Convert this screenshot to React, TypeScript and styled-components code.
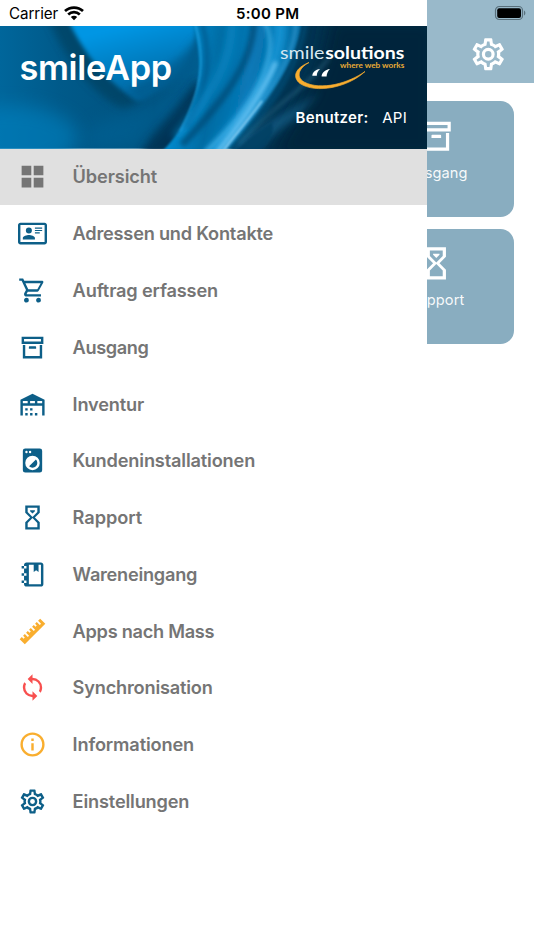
import React from 'react';
import styled, { createGlobalStyle } from 'styled-components';

const GlobalStyle = createGlobalStyle`
  *, *::before, *::after { box-sizing: border-box; }
  body { margin: 0; background: #fff; font-family: Inter, Roboto, sans-serif; }
`;

const BLUE = '#0d5f88';
const GREY = '#757575';
const AMBER = '#f9ae2f';
const RED = '#f8504f';

const icons = {
  grid: 'M3,11H11V3H3M3,21H11V13H3M13,21H21V13H13M13,3V11H21V3',
  card: 'M22,3H2C0.91,3.04 0.04,3.91 0,5V19C0.04,20.09 0.91,20.96 2,21H22C23.09,20.96 23.96,20.09 24,19V5C23.96,3.91 23.09,3.04 22,3M22,19H2V5H22V19M14,17V15.75C14,14.09 10.66,13.25 9,13.25C7.34,13.25 4,14.09 4,15.75V17H14M9,7A2.5,2.5 0 0,0 6.5,9.5A2.5,2.5 0 0,0 9,12A2.5,2.5 0 0,0 11.5,9.5A2.5,2.5 0 0,0 9,7M14,7V8H20V7H14M14,9V10H20V9H14M14,11V12H18V11H14',
  cart: 'M17,18A2,2 0 0,1 19,20A2,2 0 0,1 17,22C15.89,22 15,21.1 15,20C15,18.89 15.89,18 17,18M1,2H4.27L5.21,4H20A1,1 0 0,1 21,5C21,5.17 20.95,5.34 20.88,5.5L17.3,11.97C16.96,12.58 16.3,13 15.55,13H8.1L7.2,14.63L7.17,14.75A0.25,0.25 0 0,0 7.42,15H19V17H7C5.89,17 5,16.1 5,15C5,14.65 5.09,14.32 5.24,14.04L6.6,11.59L3,4H1V2M7,18A2,2 0 0,1 9,20A2,2 0 0,1 7,22C5.89,22 5,21.1 5,20C5,18.89 5.89,18 7,18M16,11L18.78,6H6.14L8.5,11H16Z',
  archive: 'M20 21H4V10H6V19H18V10H20V21M3 3H21V9H3V3M9.5 11H14.5C14.78 11 15 11.22 15 11.5V13H9V11.5C9 11.22 9.22 11 9.5 11M5 5V7H19V5H5Z',
  warehouse: 'M6 19H8V21H6V19M12 3L2 8V21H4V13H20V21H22V8L12 3M8 11H4V9H8V11M14 11H10V9H14V11M20 11H16V9H20V11M6 15H8V17H6V15M10 15H12V17H10V15M10 19H12V21H10V19M14 19H16V21H14V19Z',
  washer: 'M14.83,11.17C16.39,12.73 16.39,15.27 14.83,16.83C13.27,18.39 10.73,18.39 9.17,16.83L14.83,11.17M6,2H18A2,2 0 0,1 20,4V20A2,2 0 0,1 18,22H6A2,2 0 0,1 4,20V4A2,2 0 0,1 6,2M7,4A1,1 0 0,0 6,5A1,1 0 0,0 7,6A1,1 0 0,0 8,5A1,1 0 0,0 7,4M10,4A1,1 0 0,0 9,5A1,1 0 0,0 10,6A1,1 0 0,0 11,5A1,1 0 0,0 10,4M12,8A6,6 0 0,0 6,14A6,6 0 0,0 12,20A6,6 0 0,0 18,14A6,6 0 0,0 12,8Z',
  sand: 'M6,2V8L10,12L6,16V22H18V16L14,12L18,8V2H6M16,16.5V20H8V16.5L12,12.5L16,16.5M12,11.5L8,7.5V4H16V7.5L12,11.5M10,6V6.75L12,8.75L14,6.75V6H10Z',
  notebook: 'M3 7V5H5V4C5 2.9 5.9 2 7 2H19C20.1 2 21 2.9 21 4V20C21 21.1 20.1 22 19 22H7C5.9 22 5 21.1 5 20V19H3V17H5V13H3V11H5V7H3M9 4V20H19V4H17V10L15 8.5L13 10V4H9M5 5V7H7V5H5M5 11V13H7V11H5M5 17V19H7V17H5Z',
  ruler: 'M1.39,18.36L3.16,16.6L4.58,18L5.64,16.95L4.22,15.54L5.64,14.12L8.11,16.6L9.17,15.54L6.7,13.06L8.11,11.65L9.53,13.06L10.59,12L9.17,10.59L10.59,9.17L13.06,11.65L14.12,10.59L11.65,8.11L13.06,6.7L14.47,8.11L15.54,7.05L14.12,5.64L15.54,4.22L18,6.7L19.07,5.64L16.6,3.16L18.36,1.39L22.61,5.64L5.64,22.61L1.39,18.36Z',
  sync: 'M12,18A6,6 0 0,1 6,12C6,11 6.25,10.03 6.7,9.2L5.24,7.74C4.46,8.97 4,10.43 4,12A8,8 0 0,0 12,20V23L16,19L12,15M12,4V1L8,5L12,9V6A6,6 0 0,1 18,12C18,13 17.75,13.97 17.3,14.8L18.76,16.26C19.54,15.03 20,13.57 20,12A8,8 0 0,0 12,4Z',
  info: 'M11,9H13V7H11M12,20C7.59,20 4,16.41 4,12C4,7.59 7.59,4 12,4C16.41,4 20,7.59 20,12C20,16.41 16.41,20 12,20M12,2A10,10 0 0,0 2,12A10,10 0 0,0 12,22A10,10 0 0,0 22,12A10,10 0 0,0 12,2M11,17H13V11H11V17Z',
  cog: 'M12,8A4,4 0 0,1 16,12A4,4 0 0,1 12,16A4,4 0 0,1 8,12A4,4 0 0,1 12,8M12,10A2,2 0 0,0 10,12A2,2 0 0,0 12,14A2,2 0 0,0 14,12A2,2 0 0,0 12,10M10,22C9.75,22 9.54,21.82 9.5,21.58L9.13,18.93C8.5,18.68 7.96,18.34 7.44,17.94L4.95,18.95C4.73,19.03 4.46,18.95 4.34,18.73L2.34,15.27C2.21,15.05 2.27,14.78 2.46,14.63L4.57,12.97L4.5,12L4.57,11L2.46,9.37C2.27,9.22 2.21,8.95 2.34,8.73L4.34,5.27C4.46,5.05 4.73,4.96 4.95,5.05L7.44,6.05C7.96,5.66 8.5,5.32 9.13,5.07L9.5,2.42C9.54,2.18 9.75,2 10,2H14C14.25,2 14.46,2.18 14.5,2.42L14.87,5.07C15.5,5.32 16.04,5.66 16.56,6.05L19.05,5.05C19.27,4.96 19.54,5.05 19.66,5.27L21.66,8.73C21.79,8.95 21.73,9.22 21.54,9.37L19.43,11L19.5,12L19.43,13L21.54,14.63C21.73,14.78 21.79,15.05 21.66,15.27L19.66,18.73C19.54,18.95 19.27,19.04 19.05,18.95L16.56,17.95C16.04,18.34 15.5,18.68 14.87,18.93L14.5,21.58C14.46,21.82 14.25,22 14,22H10M11.25,4L10.88,6.61C9.68,6.86 8.62,7.5 7.85,8.39L5.44,7.35L4.69,8.65L6.8,10.2C6.4,11.37 6.4,12.64 6.8,13.8L4.68,15.36L5.43,16.66L7.86,15.62C8.63,16.5 9.68,17.14 10.87,17.38L11.24,20H12.76L13.13,17.39C14.32,17.14 15.37,16.5 16.14,15.62L18.57,16.66L19.32,15.36L17.2,13.81C17.6,12.64 17.6,11.37 17.2,10.2L19.31,8.65L18.56,7.35L16.15,8.39C15.38,7.5 14.32,6.86 13.12,6.62L12.75,4H11.25Z',
};

type IconName = keyof typeof icons;

const IconSvg = styled.svg<{ $size: number; $color: string }>`
  display: block;
  flex: none;
  width: ${(p) => p.$size}px;
  height: ${(p) => p.$size}px;
  fill: ${(p) => p.$color};
  fill-rule: evenodd;
`;

function Icon({ name, size, color }: { name: IconName; size: number; color: string }) {
  return (
    <IconSvg viewBox="0 0 24 24" $size={size} $color={color} aria-hidden="true">
      <path d={icons[name]} />
    </IconSvg>
  );
}

const Screen = styled.div`
  position: relative;
  width: 534px;
  height: 950px;
  overflow: hidden;
  background: #fff;
`;

const AppBar = styled.header`
  display: flex;
  justify-content: flex-end;
  align-items: flex-end;
  height: 82.6px;
  padding: 0 26.3px 9.3px 0;
  background: #99b9ca;
`;

const Tiles = styled.main`
  display: flex;
  flex-direction: column;
  align-items: flex-end;
  gap: 11.8px;
  padding: 18.8px 19.6px 0 0;
`;

const Tile = styled.section`
  display: flex;
  flex-direction: column;
  align-items: center;
  width: 155.4px;
  height: 115.6px;
  padding-top: 15.4px;
  border-radius: 13.5px;
  background: #89adc0;
`;

const TileLabel = styled.span`
  margin-top: 7.2px;
  font-size: 14.6px;
  line-height: 20px;
  letter-spacing: 0.12px;
  color: rgba(255, 255, 255, 0.94);
`;

const Drawer = styled.aside`
  position: absolute;
  inset: 0 auto 0 0;
  display: flex;
  flex-direction: column;
  width: 427px;
  padding-top: 26px;
  background: #fff;
`;

const StatusBar = styled.div`
  position: absolute;
  inset: 0 0 auto 0;
  display: grid;
  grid-template-columns: 1fr auto 1fr;
  align-items: center;
  height: 27px;
  padding: 0 7.6px 0 9px;
  color: #000;
  font-size: 15.2px;
`;

const Carrier = styled.div`
  display: flex;
  align-items: center;
  gap: 6px;
  letter-spacing: -0.08px;
`;

const Clock = styled.time`
  font-weight: 600;
  font-size: 15px;
  letter-spacing: 0.3px;
`;

const Battery = styled.svg`
  justify-self: end;
  width: 32px;
  height: 16px;
  margin-bottom: 1px;
`;

const Banner = styled.div`
  position: relative;
  flex: none;
  display: flex;
  justify-content: space-between;
  height: 122.6px;
  padding: 0 20px 0 19.4px;
  overflow: hidden;
  color: #fff;
`;

const BannerArt = styled.svg`
  position: absolute;
  inset: 0;
  width: 100%;
  height: 100%;
`;

const AppName = styled.h1`
  position: relative;
  margin: 20px 0 0;
  font-size: 34.3px;
  line-height: 44px;
  font-weight: 600;
  letter-spacing: -0.25px;
`;

const BannerSide = styled.div`
  position: relative;
  display: flex;
  flex-direction: column;
  align-items: flex-end;
  padding-top: 14px;
`;

const Logo = styled.svg`
  display: block;
  width: 130px;
  height: 54px;
`;

const UserLine = styled.div`
  display: flex;
  gap: 13.5px;
  margin-top: 13.6px;
  font-size: 15px;
  line-height: 20px;
  letter-spacing: 0.3px;
`;

const UserLabel = styled.span`
  font-weight: 600;
  letter-spacing: 0.32px;
`;

const Menu = styled.nav`
  display: flex;
  flex-direction: column;
`;

const MenuItem = styled.a<{ $active?: boolean }>`
  display: flex;
  align-items: center;
  height: 56.77px;
  padding-left: 18px;
  gap: 25.6px;
  background: ${(p) => (p.$active ? '#e0e0e0' : 'transparent')};
`;

const MenuLabel = styled.span<{ $track: number }>`
  margin-bottom: 1px;
  font-size: 18.2px;
  font-weight: 600;
  line-height: 24px;
  letter-spacing: ${(p) => p.$track}px;
  color: ${GREY};
`;

const items: { icon: IconName; label: string; color: string; track: number }[] = [
  { icon: 'grid', label: 'Übersicht', color: GREY, track: -0.12 },
  { icon: 'card', label: 'Adressen und Kontakte', color: BLUE, track: -0.22 },
  { icon: 'cart', label: 'Auftrag erfassen', color: BLUE, track: -0.16 },
  { icon: 'archive', label: 'Ausgang', color: BLUE, track: -0.4 },
  { icon: 'warehouse', label: 'Inventur', color: BLUE, track: -0.17 },
  { icon: 'washer', label: 'Kundeninstallationen', color: BLUE, track: -0.16 },
  { icon: 'sand', label: 'Rapport', color: BLUE, track: -0.06 },
  { icon: 'notebook', label: 'Wareneingang', color: BLUE, track: -0.26 },
  { icon: 'ruler', label: 'Apps nach Mass', color: AMBER, track: -0.28 },
  { icon: 'sync', label: 'Synchronisation', color: RED, track: -0.2 },
  { icon: 'info', label: 'Informationen', color: AMBER, track: -0.15 },
  { icon: 'cog', label: 'Einstellungen', color: BLUE, track: -0.17 },
];

function WaveArt() {
  return (
    <BannerArt viewBox="0 0 427 123" preserveAspectRatio="none" aria-hidden="true">
      <defs>
        <linearGradient id="base" x1="0" y1="0" x2="427" y2="0" gradientUnits="userSpaceOnUse">
          <stop offset="0" stopColor="#00669b" />
          <stop offset=".14" stopColor="#005a8a" />
          <stop offset=".36" stopColor="#00517d" />
          <stop offset=".56" stopColor="#006aa1" />
          <stop offset=".7" stopColor="#00476d" />
          <stop offset=".83" stopColor="#002b44" />
          <stop offset="1" stopColor="#00263b" />
        </linearGradient>
        <linearGradient id="sail" x1="128" y1="0" x2="150" y2="88" gradientUnits="userSpaceOnUse">
          <stop offset="0" stopColor="#0496e4" />
          <stop offset=".45" stopColor="#047bbd" />
          <stop offset="1" stopColor="#00578a" />
        </linearGradient>
        <linearGradient id="band" x1="190" y1="0" x2="300" y2="20" gradientUnits="userSpaceOnUse">
          <stop offset="0" stopColor="#0589cc" />
          <stop offset=".3" stopColor="#006ba2" />
          <stop offset=".6" stopColor="#0879b7" />
          <stop offset="1" stopColor="#00669c" />
        </linearGradient>
        <filter id="b1" x="-20%" y="-20%" width="140%" height="140%"><feGaussianBlur stdDeviation="0.9" /></filter>
        <filter id="b2" x="-30%" y="-30%" width="160%" height="160%"><feGaussianBlur stdDeviation="2" /></filter>
        <filter id="b3" x="-30%" y="-30%" width="160%" height="160%"><feGaussianBlur stdDeviation="4" /></filter>
        <filter id="b8" x="-50%" y="-50%" width="200%" height="200%"><feGaussianBlur stdDeviation="9" /></filter>
      </defs>
      <rect width="427" height="123" fill="url(#base)" />
      <ellipse cx="10" cy="112" rx="68" ry="32" fill="#0081c0" opacity=".6" filter="url(#b8)" />
      <path d="M48 -8H76C92 28 116 58 142 76L124 84C90 66 66 34 48 -8Z" fill="#00405f" opacity=".7" filter="url(#b3)" />
      <path d="M68 -6H195C199 28 181 52 138 75C108 58 84 28 68 -6Z" fill="url(#sail)" filter="url(#b2)" />
      <path d="M197 10C182 36 160 46 128 64L140 76C164 64 186 54 198 40Z" fill="#005c8e" opacity=".8" filter="url(#b3)" />
      <path d="M197 54C182 76 160 95 140 128H181C194 106 203 81 199 54Z" fill="#002f4d" opacity=".85" filter="url(#b3)" />
      <path d="M90 103C124 84 157 76 188 68C170 92 150 105 137 123H83Z" fill="#00679e" opacity=".45" filter="url(#b8)" />
      <path d="M299 -5H440V130H222C262 87 288 52 299 -5Z" fill="#003553" filter="url(#b3)" />
      <path d="M328 -10H440V135H265C300 82 324 40 328 -10Z" fill="#002337" opacity=".85" filter="url(#b8)" />
      <path d="M191 -5H302C296 46 259 81 222 128H160C203 86 206 36 191 -5Z" fill="url(#band)" filter="url(#b1)" />
      <path d="M195 -3C206 34 202 62 180 106" fill="none" stroke="#28a7e6" strokeWidth="1.6" opacity=".75" filter="url(#b1)" />
      <path d="M202 -3C212 34 208 64 186 102" fill="none" stroke="#00568a" strokeWidth="5" opacity=".7" filter="url(#b2)" />
      <path d="M232 -5C232 37 212 67 176 112" fill="none" stroke="#0b94d6" strokeWidth="8" opacity=".6" filter="url(#b3)" />
      <path d="M254 -5C253 38 221 78 182 119" fill="none" stroke="#004a75" strokeWidth="7" opacity=".7" filter="url(#b2)" />
      <path d="M280 -5C283 30 260 78 209 130" fill="none" stroke="#1f9fe0" strokeWidth="12" opacity=".8" filter="url(#b3)" />
      <path d="M264 -5C280 22 264 72 204 128" fill="none" stroke="#55bff2" strokeWidth="3" opacity=".75" filter="url(#b2)" />
      <path d="M296 -5C296 34 264 77 220 128" fill="none" stroke="#3da6de" strokeWidth="3.5" opacity=".75" filter="url(#b2)" />
      <path d="M276 36C262 70 238 100 216 128" fill="none" stroke="#7dd0fc" strokeWidth="5" opacity=".75" filter="url(#b2)" />
      <path d="M262 75C248 95 234 110 222 127" fill="none" stroke="#a8e2ff" strokeWidth="1.6" opacity=".8" filter="url(#b1)" />
      <path d="M306 -5C298 44 272 78 232 128" fill="none" stroke="#00507c" strokeWidth="4" opacity=".8" filter="url(#b2)" />
      <path d="M329 32C304 65 270 82 239 118" fill="none" stroke="#397995" strokeWidth="3" opacity=".5" filter="url(#b2)" />
      <path d="M320 66C294 84 260 97 234 125H257C271 111 280 102 294 94" fill="#1a6f9d" opacity=".55" filter="url(#b3)" />
      <path d="M236 125C251 111 265 101 272 97C275 108 269 116 260 125Z" fill="#004064" opacity=".85" filter="url(#b1)" />
    </BannerArt>
  );
}

function BrandLogo() {
  return (
    <Logo viewBox="0 0 130 54" role="img">
      <text x="3" y="18.8" fill="#d7e8f1" fontFamily="Lato, sans-serif" fontSize="16.4" fontWeight="400" textLength="44.5" lengthAdjust="spacingAndGlyphs">smile</text>
      <text x="48.3" y="18.8" fill="#fff" fontFamily="Lato, sans-serif" fontSize="16.4" fontWeight="700" textLength="79" lengthAdjust="spacingAndGlyphs">solutions</text>
      <text x="63" y="28" fill="#e9ab35" fontFamily="Lato, sans-serif" fontSize="6.8" fontWeight="700" textLength="64.3" lengthAdjust="spacingAndGlyphs">where web works</text>
      <path d="M32 22.5C18 28 15 37 23 43.5C39 54 71 47.5 88 31.5C72 43 44 51 27 42C19 37 21 28.5 32 22.5Z" fill="#f9ae2f" stroke="#f9ae2f" strokeWidth=".7" />
      <path d="M43 29C38.5 29.6 35.5 32 35.3 35.8H39.8C39.8 33 41 31 43 29ZM53 29C48 29.6 44.6 33 44.6 36.6H49.6C49.6 33.6 51 31 53 29Z" fill="#fff" />
    </Logo>
  );
}

export default function App() {
  return (
    <>
      <GlobalStyle />
      <Screen>
        <AppBar>
          <Icon name="cog" size={38.5} color="#fff" />
        </AppBar>
        <Tiles>
          <Tile>
            <Icon name="archive" size={38.6} color="#fff" />
            <TileLabel>Ausgang</TileLabel>
          </Tile>
          <Tile>
            <Icon name="sand" size={38.6} color="#fff" />
            <TileLabel>Rapport</TileLabel>
          </Tile>
        </Tiles>
        <Drawer>
          <Banner>
            <WaveArt />
            <AppName>smileApp</AppName>
            <BannerSide>
              <BrandLogo />
              <UserLine>
                <UserLabel>Benutzer:</UserLabel>
                <span>API</span>
              </UserLine>
            </BannerSide>
          </Banner>
          <Menu>
            {items.map((item, i) => (
              <MenuItem key={item.label} $active={i === 0}>
                <Icon name={item.icon} size={29} color={item.color} />
                <MenuLabel $track={item.track}>{item.label}</MenuLabel>
              </MenuItem>
            ))}
          </Menu>
        </Drawer>
        <StatusBar>
          <Carrier>
            Carrier
            <svg width="20" height="15" viewBox="0 0 20 15" fill="none" stroke="#000" strokeWidth="2.7" aria-hidden="true">
              <path d="M1 5.1C6 .4 14 .4 19 5.1" />
              <path d="M4.2 8.5C7.5 5.4 12.5 5.4 15.8 8.5" />
              <path d="M10 14.2L6.8 11C8.7 9.4 11.3 9.4 13.2 11Z" fill="#000" stroke="none" />
            </svg>
          </Carrier>
          <Clock>5:00 PM</Clock>
          <Battery viewBox="0 0 32 16" aria-hidden="true">
            <rect x="1.5" y="1.5" width="27" height="13" rx="3.8" fill="none" stroke="#59707c" strokeWidth="1.2" />
            <rect x="3.2" y="3.2" width="23.8" height="9.8" rx="2" />
            <path d="M30 5.5C31.8 6.2 31.8 9.8 30 10.5Z" fill="#59707c" />
          </Battery>
        </StatusBar>
      </Screen>
    </>
  );
}
